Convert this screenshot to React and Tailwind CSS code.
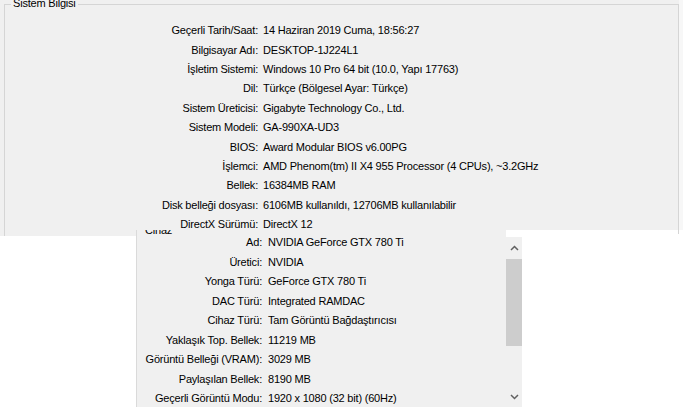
import React from "react";

const top = [
  ["Geçerli Tarih/Saat:", "14 Haziran 2019 Cuma, 18:56:27"],
  ["Bilgisayar Adı:", "DESKTOP-1J224L1"],
  ["İşletim Sistemi:", "Windows 10 Pro 64 bit (10.0, Yapı 17763)"],
  ["Dil:", "Türkçe (Bölgesel Ayar: Türkçe)"],
  ["Sistem Üreticisi:", "Gigabyte Technology Co., Ltd."],
  ["Sistem Modeli:", "GA-990XA-UD3"],
  ["BIOS:", "Award Modular BIOS v6.00PG"],
  ["İşlemci:", "AMD Phenom(tm) II X4 955 Processor (4 CPUs), ~3.2GHz"],
  ["Bellek:", "16384MB RAM"],
  ["Disk belleği dosyası:", "6106MB kullanıldı, 12706MB kullanılabilir"],
  ["DirectX Sürümü:", "DirectX 12"],
];

const bottom = [
  ["Ad:", "NVIDIA GeForce GTX 780 Ti"],
  ["Üretici:", "NVIDIA"],
  ["Yonga Türü:", "GeForce GTX 780 Ti"],
  ["DAC Türü:", "Integrated RAMDAC"],
  ["Cihaz Türü:", "Tam Görüntü Bağdaştırıcısı"],
  ["Yaklaşık Top. Bellek:", "11219 MB"],
  ["Görüntü Belleği (VRAM):", "3029 MB"],
  ["Paylaşılan Bellek:", "8190 MB"],
  ["Geçerli Görüntü Modu:", "1920 x 1080 (32 bit) (60Hz)"],
];

export default function App() {
  return (
    <div
      className="w-[683px] h-[407px] overflow-hidden bg-white text-black text-[11px] leading-none tracking-[-0.2px]"
      style={{ fontFamily: '"Liberation Sans", Arial, sans-serif' }}
    >
      {/* top panel */}
      <div className="h-[230px] bg-[#f0f0f0] flex">
        <div className="w-[679px] h-full pl-[4px] pt-[4px] flex flex-col">
          <div className="relative flex-1 border-l border-t border-r border-[#d5d5d5] flex flex-col pt-[16px]">
            <div className="absolute left-[6px] top-[-8px] bg-[#f0f0f0] px-[2px] h-[12px] flex items-center">
              Sistem Bilgisi
            </div>
            {top.map(([l, v]) => (
              <div key={l} className="flex h-[19.4px] items-center">
                <div className="w-[253px] text-right">{l}</div>
                <div className="pl-[5px] whitespace-nowrap">{v}</div>
              </div>
            ))}
          </div>
        </div>
        <div className="flex-1 bg-[#f7f7f7]" />
      </div>
      {/* bottom */}
      <div className="flex h-[177px]">
        <div className="w-[136px] flex flex-col">
          <div className="h-[6px] bg-[#f0f0f0] pl-[4px]">
            <div className="h-full border-l border-[#d5d5d5]" />
          </div>
        </div>
        <div className="w-[386px] bg-[#f0f0f0] border-l border-[#dadada] flex">
          <div className="flex-1 relative overflow-hidden">
            <div className="absolute left-[8px] top-[-5px]">Cihaz</div>
            <div className="flex flex-col pt-[3px]">
              {bottom.map(([l, v]) => (
                <div key={l} className="flex h-[19.5px] items-center">
                  <div className="w-[125px] text-right whitespace-nowrap">{l}</div>
                  <div className="pl-[6px] whitespace-nowrap">{v}</div>
                </div>
              ))}
            </div>
          </div>
          <div className="w-[16px] bg-white flex flex-col pt-[7px]">
            <div className="flex-1 bg-[#f0f0f0] flex flex-col items-center">
              <div className="h-[22px] flex items-center justify-center">
                <svg width="9" height="6" viewBox="0 0 9 6">
                  <path d="M1 5 L4.5 1.5 L8 5" fill="none" stroke="#606060" strokeWidth="1.5" />
                </svg>
              </div>
              <div className="w-full h-[87px] bg-[#cdcdcd]" />
              <div className="flex-1" />
              <div className="h-[20px] flex items-center justify-center">
                <svg width="9" height="6" viewBox="0 0 9 6">
                  <path d="M1 1 L4.5 4.5 L8 1" fill="none" stroke="#606060" strokeWidth="1.5" />
                </svg>
              </div>
            </div>
          </div>
        </div>
        <div className="flex-1 bg-white" />
      </div>
    </div>
  );
}
